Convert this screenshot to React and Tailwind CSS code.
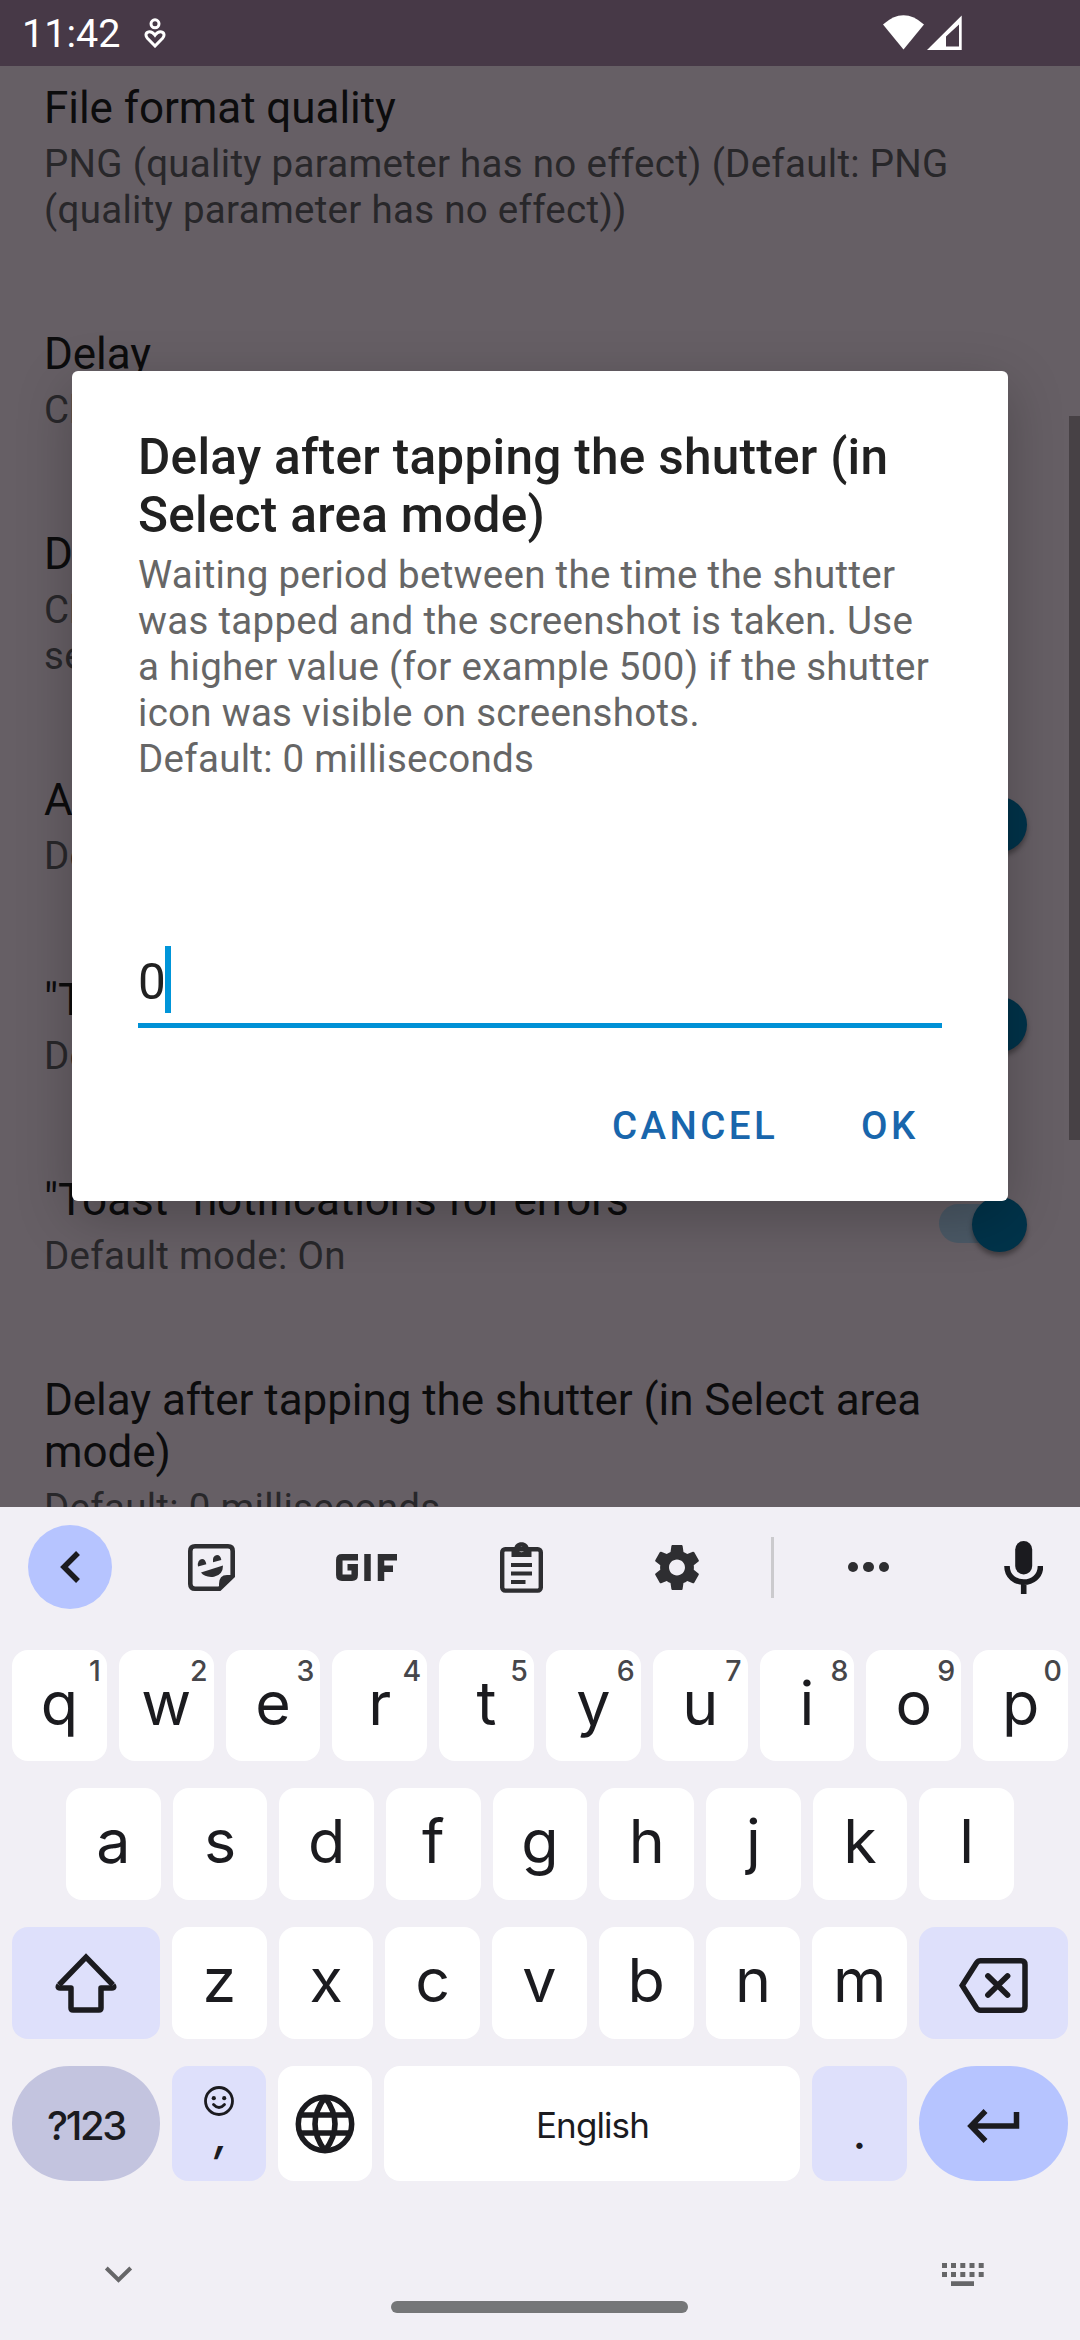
import React from "react";

function Switch() {
  return (
    <div className="relative mb-[4px] h-[55px] w-[88px] shrink-0">
      <div className="absolute top-[7px] left-0 h-[39px] w-[79px] rounded-full bg-[#4b5966]" />
      <div className="absolute top-0 right-0 size-[55px] rounded-full bg-[#00334a] shadow-[0_4px_5px_rgba(0,0,0,0.35)]" />
    </div>
  );
}

function Preference({ title, lines, toggle }) {
  return (
    <div className="mb-[95px] flex items-center justify-between">
      <div className="whitespace-nowrap">
        {title.map((t) => (
          <div key={t} className="text-[44px] leading-[52px] tracking-[-0.06px] text-[#0c0c0d]">{t}</div>
        ))}
        <div className="mt-[7px] text-[38.5px] leading-[46px] tracking-[0.29px] text-[#28272a]">
          {lines.map((t) => (
            <div key={t}>{t}</div>
          ))}
        </div>
      </div>
      {toggle && <Switch />}
    </div>
  );
}

const preferences = [
  {
    title: ["File format quality"],
    lines: ["PNG (quality parameter has no effect) (Default: PNG", "(quality parameter has no effect))"],
  },
  { title: ["Delay"], lines: ["Choose the delay"] },
  { title: ["Delay for long press"], lines: ["Choose the delay in", "seconds"] },
  { title: ["Automatic mode"], lines: ["Default mode: On"], toggle: true },
  { title: ['"Toast" notifications'], lines: ["Default mode: On"], toggle: true },
  { title: ['"Toast" notifications for errors'], lines: ["Default mode: On"], toggle: true },
  { title: ["Delay after tapping the shutter (in Select area", "mode)"], lines: ["Default: 0 milliseconds"] },
];

function StatusBar() {
  return (
    <div className="flex h-[66px] items-center bg-[#473947] text-white">
      <div className="mt-px ml-[22px] w-[122px] text-[39.5px] leading-[48px]">11:42</div>
      <svg className="h-[30px] w-[22px]" viewBox="0 0 22 30" fill="none" stroke="#fff" strokeWidth="3">
        <circle cx="11" cy="5.8" r="4" />
        <path d="M11 28 L3.4 20.2 C1.2 17.8 1.6 14.6 4.4 14 C7 13.4 9 14.6 11 17.2 C13 14.6 15 13.4 17.6 14 C20.4 14.6 20.8 17.8 18.6 20.2 Z" />
      </svg>
      <svg className="ml-[717px] h-[36px] w-[80px]" viewBox="883 15 80 36" fill="#fff">
        <path d="M883 24.5 Q903.500 6 924 24.500 L903.500 49.500 Z" />
        <path fillRule="evenodd" d="M927 50 L961.700 15.500 V50 Z M946 46.500 H959 V24.500 L946 36.500 Z" />
      </svg>
    </div>
  );
}

function Dialog() {
  return (
    <div className="absolute top-[371px] left-[72px] flex h-[830px] w-[936px] flex-col rounded-[6px] bg-white px-[66px] pt-[57px] shadow-[0_16px_56px_rgba(0,0,0,0.24)]">
      <div className="text-[49.5px] leading-[58px] font-medium tracking-[0.28px] whitespace-nowrap text-[#212121]">
        <div>Delay after tapping the shutter (in</div>
        <div>Select area mode)</div>
      </div>
      <div className="mt-[8px] text-[38.5px] leading-[46px] tracking-[0.28px] whitespace-nowrap text-[#666666]">
        <div>Waiting period between the time the shutter</div>
        <div>was tapped and the screenshot is taken. Use</div>
        <div>a higher value (for example 500) if the shutter</div>
        <div>icon was visible on screenshots.</div>
        <div>Default: 0 milliseconds</div>
      </div>
      <div className="mt-[164px] flex h-[82px] w-[804px] items-start border-b-[5px] border-[#0091d6]">
        <div className="mt-[3px] w-[27px] text-[49.5px] leading-[66px] text-[#212121]">0</div>
        <div className="h-[67px] w-[6px] bg-[#0095d9]" />
      </div>
      <div className="mt-[73px] ml-[474px] flex text-[38.5px] leading-[50px] font-medium tracking-[3.44px] text-[#1966ac]">
        <div className="w-[249px]">CANCEL</div>
        <div>OK</div>
      </div>
    </div>
  );
}

function Toolbar() {
  return (
    <div className="flex h-[120px] items-center">
      <div className="ml-[28px] flex size-[84px] items-center justify-center rounded-full bg-[#b6c4ff]">
        <svg className="h-[34px] w-[22px]" viewBox="0 0 22 34" fill="none" stroke="#1b1b1f" strokeWidth="5.500">
          <path d="M19 3 L5 17 L19 31" />
        </svg>
      </div>
      <div className="ml-[22px] flex w-[155px] justify-center">
        <svg className="size-[47px]" viewBox="0 0 47 47" fill="#2e2e31">
          <path d="M31.500 44.700 H7 Q2.300 44.700 2.300 40 V7 Q2.300 2.300 7 2.300 H40 Q44.700 2.300 44.700 7 V32 Z" fill="none" stroke="#2e2e31" strokeWidth="4.600" />
          <path d="M31 45 V40 Q31 31 39 31 H45 V33 L33 45 Z" />
          <path d="M13 28.500 L35 21.500 Q35 31 26 32.700 Q17 33.800 13 28.500 Z" />
          <path d="M10 22.500 Q9 16 14 15 Q17.500 15 18.300 20.200 Z" />
          <path d="M25 18.300 Q24 12 29 11 Q32.500 11 33.300 16 Z" />
        </svg>
      </div>
      <div className="flex w-[155px] justify-center">
        <svg className="h-[27px] w-[61px]" viewBox="0 0 61 27" fill="none" stroke="#2e2e31" strokeWidth="6.500">
          <path d="M22 3.300 H6 Q3.300 3.300 3.300 6 V21 Q3.300 23.700 6 23.700 H16 Q18.700 23.700 18.700 21 V13.300 H11.500" />
          <path d="M31.500 0 V27" />
          <path d="M45 27 V3.300 H61 M45 14.800 H57" />
        </svg>
      </div>
      <div className="flex w-[155px] justify-center">
        <svg className="h-[51px] w-[43px]" viewBox="0 0 43 51" fill="#2e2e31">
          <rect x="2.200" y="7.200" width="38.600" height="41.400" rx="3" fill="none" stroke="#2e2e31" strokeWidth="4.400" />
          <path fillRule="evenodd" d="M11.500 5 H14.500 C16 -1.500 27 -1.500 28.500 5 H31.500 V15 H11.500 Z M18.800 7.500 A2.700 2.700 0 1 0 24.200 7.500 A2.700 2.700 0 1 0 18.800 7.500 Z" />
          <path d="M11 21 H32 V25 H11 Z M11 29.500 H32 V33.500 H11 Z M11 38 H25.500 V42 H11 Z" />
        </svg>
      </div>
      <div className="flex w-[155px] justify-center">
        <svg className="h-[47px] w-[46px]" viewBox="2.200 2 19.600 20" fill="#2e2e31">
          <path d="M19.140 12.940c.04-.3.060-.610.060-.940 0-.320-.020-.640-.070-.940l2.030-1.580c.180-.140.230-.410.120-.610l-1.920-3.320c-.120-.220-.370-.290-.590-.220l-2.390.960c-.500-.380-1.030-.700-1.620-.940l-.360-2.540c-.040-.240-.240-.410-.480-.410h-3.840c-.240 0-.430.170-.470.410l-.360 2.540c-.590.240-1.130.570-1.620.940l-2.390-.960c-.220-.080-.470 0-.590.220L2.740 8.870c-.120.210-.080.470.120.610l2.030 1.580c-.050.300-.090.630-.090.940s.020.640.070.940l-2.030 1.580c-.180.140-.230.410-.120.610l1.920 3.320c.120.220.370.290.590.220l2.390-.960c.500.380 1.030.700 1.620.940l.360 2.540c.050.240.240.410.480.410h3.840c.240 0 .440-.170.470-.410l.360-2.540c.590-.240 1.130-.560 1.620-.940l2.390.960c.220.080.470 0 .590-.220l1.920-3.320c.120-.220.070-.470-.120-.610l-2.010-1.580zM12 15.400c-1.880 0-3.400-1.520-3.400-3.400s1.520-3.400 3.400-3.400 3.400 1.520 3.400 3.400-1.520 3.400-3.400 3.400z" />
        </svg>
      </div>
      <div className="ml-[17px] h-[61px] w-[3px] bg-[#cbcacd]" />
      <div className="ml-[17px] flex w-[155px] justify-center gap-[5px]">
        <div className="size-[10.500px] rounded-full bg-[#2e2e31]" />
        <div className="size-[10.500px] rounded-full bg-[#2e2e31]" />
        <div className="size-[10.500px] rounded-full bg-[#2e2e31]" />
      </div>
      <svg className="ml-[58px] h-[53px] w-[39px]" viewBox="0 0 39 53" fill="#1b1b1f">
        <rect x="11.200" y="0" width="17" height="33.500" rx="8.500" />
        <path d="M3 25 C3 46.500 36.500 46.500 36.500 25 M19.700 41 V53" fill="none" stroke="#1b1b1f" strokeWidth="5.600" />
      </svg>
    </div>
  );
}

function Key({ label, hint }) {
  return (
    <div className="relative flex flex-1 items-center justify-center rounded-[16px] bg-white">
      <span className="mb-[6px] text-[61px] leading-[72px] text-[#1b1b1f]">{label}</span>
      {hint && <span className="absolute top-[4px] right-[6px] text-[28.5px] leading-[34px] font-medium text-[#46464a]">{hint}</span>}
    </div>
  );
}

const topRow = [["q", "1"], ["w", "2"], ["e", "3"], ["r", "4"], ["t", "5"], ["y", "6"], ["u", "7"], ["i", "8"], ["o", "9"], ["p", "0"]];

function Keyboard() {
  return (
    <div className="relative h-[833px] bg-[#f1eff5] font-[Inter,sans-serif]">
      <Toolbar />
      <div className="mt-[23px] flex h-[111px] gap-[12px] px-[12px]">
        {topRow.map(([k, h]) => (
          <Key key={k} label={k} hint={h} />
        ))}
      </div>
      <div className="mt-[27px] flex h-[112px] gap-[12px] px-[66px]">
        {"asdfghjkl".split("").map((k) => (
          <Key key={k} label={k} />
        ))}
      </div>
      <div className="mt-[27px] flex h-[112px] gap-[12px] px-[12px]">
        <div className="flex w-[148px] items-center justify-center rounded-[16px] bg-[#dee0fb]">
          <svg className="h-[60px] w-[62px]" viewBox="0 0 62 60" fill="none" stroke="#1b1b1f" strokeWidth="5.500" strokeLinejoin="round">
            <path strokeLinejoin="miter" d="M4 32 L31 4.200 L58 32" />
            <path d="M4 32 Q2 35 5 35 H16 V55 Q16 57 18 57 H44 Q46 57 46 55 V35 H57 Q60 35 58 32" />
          </svg>
        </div>
        {"zxcvbnm".split("").map((k) => (
          <Key key={k} label={k} />
        ))}
        <div className="flex w-[149px] items-center justify-center rounded-[16px] bg-[#dee0fb]">
          <svg className="mt-[5px] h-[55px] w-[70px]" viewBox="0 0 70 55" fill="none" stroke="#1b1b1f" strokeWidth="5.500">
            <path d="M3.200 27.500 L17.500 5 Q19 2.800 21.500 2.800 H62 Q66 2.800 66 6.800 V48.200 Q66 52.200 62 52.200 H21.500 Q19 52.200 17.500 50 Z" />
            <path d="M29 18 L48.500 37 M48.500 18 L29 37" strokeWidth="5.800" strokeLinecap="round" />
          </svg>
        </div>
      </div>
      <div className="mt-[27px] flex h-[115px] gap-[12px] px-[12px] text-[#1b1b1f]">
        <div className="flex w-[148px] items-center justify-center rounded-full bg-[#c3c4df] pt-[4px] text-[40px] leading-[48px] font-medium tracking-[-2.4px]">?123</div>
        <div className="flex w-[94px] flex-col items-center rounded-[16px] bg-[#dee0fb] pt-[20px]">
          <svg className="size-[30px] shrink-0" viewBox="0 0 30 30" fill="none" stroke="#1b1b1f" strokeWidth="2.800">
            <circle cx="15" cy="15" r="13.500" />
            <path d="M9.500 18.500 Q15 24.500 20.500 18.500" strokeLinecap="round" />
            <circle cx="9.800" cy="12.200" r="2.100" fill="#1b1b1f" stroke="none" />
            <circle cx="20.200" cy="12.200" r="2.100" fill="#1b1b1f" stroke="none" />
          </svg>
          <span className="-mt-[6px] pl-[5px] text-[46px] leading-[48px] font-medium italic">,</span>
        </div>
        <div className="flex w-[94px] items-center justify-center rounded-[16px] bg-white">
          <svg className="size-[60px]" viewBox="0 0 60 60" fill="none" stroke="#1b1b1f" strokeWidth="5.500">
            <circle cx="30" cy="30" r="26.700" />
            <path d="M30 3.300 Q10 30 30 56.700 M30 3.300 Q50 30 30 56.700 M5 21 H55 M5 39 H55" />
          </svg>
        </div>
        <div className="flex flex-1 items-center justify-center rounded-[16px] bg-white pt-[3px] pl-[1px] text-[35px] leading-[42px] tracking-[-0.9px]">English</div>
        <div className="flex w-[95px] justify-center rounded-[16px] bg-[#dee0fb] pt-[43px]">
          <span className="text-[44px] leading-[48px] font-medium">.</span>
        </div>
        <div className="flex w-[149px] items-center justify-center rounded-full bg-[#b6c4ff]">
          <svg className="mt-[4px] h-[34px] w-[53px]" viewBox="0 0 53 34" fill="none" stroke="#1b1b1f" strokeWidth="5.500">
            <path d="M18.500 2 L4 17 L18.500 32 M4 17 H49.500 V3" />
          </svg>
        </div>
      </div>
      <div className="mt-[82px] flex h-[24px] items-start justify-between pr-[96px] pl-[104px]">
        <svg className="mt-[3px] h-[18px] w-[29px]" viewBox="0 0 29 18" fill="none" stroke="#666668" strokeWidth="4">
          <path d="M2.300 2 L14.500 14 L26.700 2" />
        </svg>
        <svg className="h-[23px] w-[42px]" viewBox="0 0 42 23" fill="#666668">
          <path d="M0 0h5v5h-5z M9 0h5v5h-5z M18.300 0h5v5h-5z M27.500 0h5v5h-5z M36.700 0h5v5h-5z M0 9h5v5h-5z M9 9h5v5h-5z M18.300 9h5v5h-5z M27.500 9h5v5h-5z M36.700 9h5v5h-5z M9 18.300h23v5H9z" />
        </svg>
      </div>
      <div className="mt-[14px] ml-[391px] h-[12px] w-[297px] rounded-full bg-[#757678]" />
    </div>
  );
}

export default function App() {
  return (
    <div className="relative h-[2340px] w-[1080px] overflow-hidden bg-[#665f65] font-[Roboto,sans-serif]">
      <div className="relative h-[1507px] overflow-hidden">
        <StatusBar />
        <div className="pt-[16px] pr-[53px] pl-[44px]">
          {preferences.map((p, i) => (
            <Preference key={i} {...p} />
          ))}
        </div>
        <div className="absolute top-[416px] right-0 h-[724px] w-[11px] bg-[#474145]" />
        <Dialog />
      </div>
      <Keyboard />
    </div>
  );
}
